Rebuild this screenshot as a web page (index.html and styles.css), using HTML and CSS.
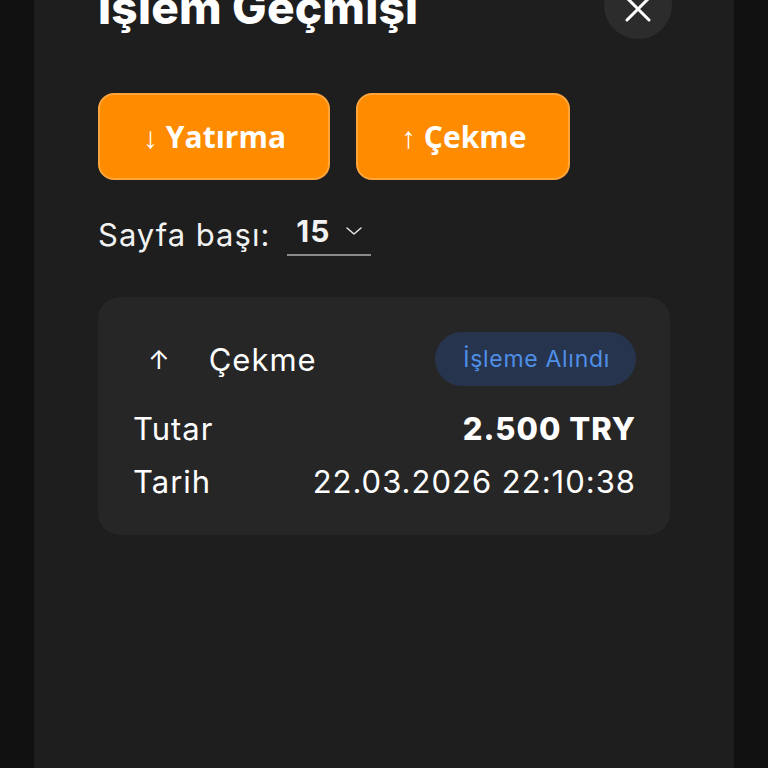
FILE: index.html
```html
<!DOCTYPE html>
<html lang="tr">

<head>
  <meta charset="UTF-8" />
  <title>İşlem Geçmişi</title>
  <link rel="stylesheet" href="styles.css">
</head>

<body>

  <div class="history-panel">
    <div class="panel-head">
      <h1>İşlem Geçmişi</h1>
      <button class="close-btn" aria-label="Kapat">
        <svg width="28" height="28" viewBox="0 0 28 28">
          <path d="M3 3 L25 25 M25 3 L3 25" stroke="#fff" stroke-width="3" stroke-linecap="round" />
        </svg>
      </button>
    </div>

    <div class="action-row">
      <button class="action-btn">↓ Yatırma</button>
      <button class="action-btn">↑ Çekme</button>
    </div>

    <div class="per-page">
      <span>Sayfa başı:</span>
      <div class="per-page-select">
        <span class="per-page-value">15</span>
        <svg width="18" height="10" viewBox="0 0 18 10">
          <path d="M2 2 L9 8 L16 2" fill="none" stroke="#e6e6e6" stroke-width="1.5" stroke-linecap="round" stroke-linejoin="round" />
        </svg>
      </div>
    </div>

    <div class="tx-card">
      <div class="tx-head">
        <div class="tx-type">
          <span class="tx-arrow">↑</span>
          <span>Çekme</span>
        </div>
        <span class="status-badge">İşleme Alındı</span>
      </div>
      <div class="tx-line">
        <span>Tutar</span>
        <span class="tx-amount">2.500 TRY</span>
      </div>
      <div class="tx-line">
        <span>Tarih</span>
        <span>22.03.2026 22:10:38</span>
      </div>
    </div>
  </div>

</body>

</html>
```

FILE: styles.css
```css
body {
  background: #111111;
  font-family: Inter, "Noto Sans", sans-serif;
  color: #fff;
  margin: 0;
  overflow: hidden;
}

.history-panel {
  width: 700px;
  min-height: calc(100vh + 40px);
  margin: 0 auto;
  padding: 0 64px;
  box-sizing: border-box;
  background: #1e1e1e;
}

.panel-head {
  display: flex;
  justify-content: space-between;
  align-items: center;
  height: 68px;
  margin-top: -29px;
  margin-right: -2px;
}

h1 {
  margin: 0;
  padding-top: 3px;
  font-size: 46px;
  font-weight: 800;
  letter-spacing: 0.2px;
}

.close-btn {
  width: 68px;
  height: 68px;
  border: none;
  border-radius: 50%;
  background: #2c2c2c;
  display: flex;
  align-items: center;
  justify-content: center;
  padding: 0;
  padding-top: 8px;
}

.action-row {
  display: flex;
  gap: 26px;
  margin-top: 54px;
}

.action-btn {
  height: 87px;
  padding: 0 42px 0 43px;
  border: 2px solid #ffa53a;
  border-radius: 16px;
  background: #ff8c00;
  color: #fff;
  font-family: "Open Sans", sans-serif;
  font-size: 30px;
  font-weight: 700;
}

/* page size picker */
.per-page {
  display: flex;
  align-items: center;
  gap: 17px;
  margin-top: 33px;
  font-size: 31px;
  letter-spacing: 1px;
  color: #f2f2f2;
}

.per-page-select {
  display: flex;
  align-items: center;
  gap: 15px;
  padding: 0 8px 5px 9px;
  border-bottom: 2px solid #8a8a8a;
}

.per-page-value {
  font-weight: 700;
  font-size: 30px;
}

.tx-card {
  margin-top: 41px;
  padding: 35px 34px 27px 35px;
  border-radius: 22px;
  background: #262626;
}

.tx-head {
  display: flex;
  justify-content: space-between;
  align-items: center;
  margin-bottom: 16px;
}

.tx-type {
  display: flex;
  align-items: center;
  gap: 38px;
  font-size: 31px;
  letter-spacing: 1px;
  padding-left: 15px;
}

.tx-arrow {
  font-size: 26px;
}

.status-badge {
  height: 54px;
  padding: 0 26px 0 28px;
  display: flex;
  align-items: center;
  border-radius: 27px;
  background: #26344e;
  color: #4f8fe8;
  font-size: 23px;
  letter-spacing: 0.7px;
}

.tx-line {
  display: flex;
  justify-content: space-between;
  font-size: 31px;
  letter-spacing: 1px;
  line-height: 53px;
}

.tx-amount {
  font-weight: 800;
}
```
